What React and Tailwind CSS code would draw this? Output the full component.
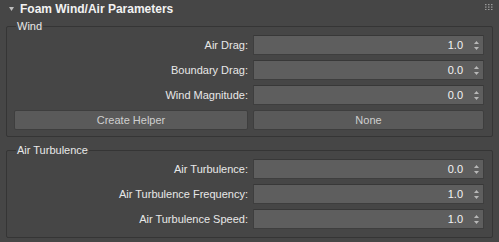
import React from 'react'

const Spinner = ({ value }) => (
    <div className="h-[20px] bg-[#5e5e5e] border border-[#3e3e3e] border-t-[#383838] rounded-[1px] flex items-center justify-end pr-[4px]">
        <span className="text-[#f4f4f4] mr-[11px]">{value}</span>
        <svg width="5" height="9" viewBox="0 0 5 9" className="text-[#b8b8b8]">
            <path d="M2.5 0 L5 3 L0 3 Z" fill="currentColor" />
            <path d="M0 6 L5 6 L2.5 9 Z" fill="currentColor" />
        </svg>
    </div>
)

const Row = ({ label, value }) => (
    <>
        <div className="h-[20px] flex items-center justify-end text-[#e8e8e8]">{label}</div>
        <Spinner value={value} />
    </>
)

const Group = ({ title, children, className = '' }) => (
    <fieldset className={`mx-[6px] border border-[#353535] rounded-[2px] pl-[7px] pr-[8px] pt-[3px] min-w-0 ${className}`}>
        <legend className="ml-[2px] px-[1px] text-[#e8e8e8] leading-[12px]">{title}</legend>
        <div className="grid grid-cols-[234px_1fr] gap-x-[5px] gap-y-[5px]">{children}</div>
    </fieldset>
)

export default function App() {
    return (
        <div className="w-[499px] h-[242px] bg-[#464646] text-[11px] overflow-hidden" style={{ fontFamily: 'Tahoma, "Liberation Sans", sans-serif' }}>
            {/* rollout header */}
            <div className="h-[20px] flex items-center relative">
                <svg width="5" height="4" viewBox="0 0 5 4" className="ml-[9px] -mt-[2px] text-[#bdbdbd]">
                    <path d="M0 0 L5 0 L2.5 4 Z" fill="currentColor" />
                </svg>
                <span className="ml-[6px] -mt-[2px] font-bold text-[12px] text-[#f2f2f2]">Foam Wind/Air Parameters</span>
                <svg width="8" height="6" viewBox="0 0 8 6" className="ml-auto mr-[6px] -mt-[6px] text-[#9a9a9a]">
                    {[0, 3, 6].map(x => [0, 2.5, 5].map(y => (
                        <rect key={`${x}-${y}`} x={x} y={y} width="1.5" height="1.2" fill="currentColor" />
                    )))}
                </svg>
            </div>

            <Group title="Wind" className="pb-[6px]">
                <Row label="Air Drag:" value="1.0" />
                <Row label="Boundary Drag:" value="0.0" />
                <Row label="Wind Magnitude:" value="0.0" />
                <button className="h-[20px] bg-[#5a5a5a] border border-[#3e3e3e] rounded-[2px] text-[#cfcfcf]">Create Helper</button>
                <button className="h-[20px] bg-[#5a5a5a] border border-[#3e3e3e] rounded-[2px] text-[#cfcfcf]">None</button>
            </Group>

            <Group title="Air Turbulence" className="mt-[7px] pb-[8px]">
                <Row label="Air Turbulence:" value="0.0" />
                <Row label="Air Turbulence Frequency:" value="1.0" />
                <Row label="Air Turbulence Speed:" value="1.0" />
            </Group>
        </div>
    )
}
